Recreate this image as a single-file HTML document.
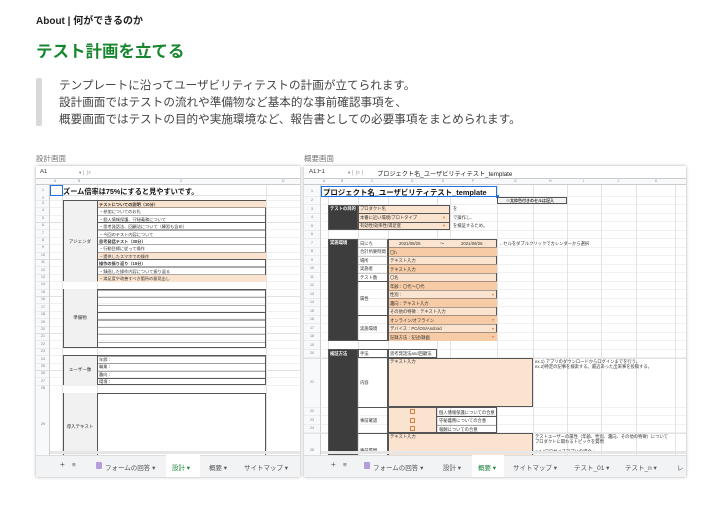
<!DOCTYPE html>
<html><head><meta charset="utf-8">
<style>
*{margin:0;padding:0;box-sizing:border-box}
body{width:720px;height:512px;background:#fff;position:relative;overflow:hidden;font-family:"Liberation Sans","Noto Sans CJK JP",sans-serif;color:#222}
.a{position:absolute}
.t{position:absolute;font-size:4.3px;white-space:nowrap;color:#333;overflow:hidden}
.b{font-weight:bold}
.sheet{position:absolute;background:#fff;box-shadow:0 0 3px rgba(0,0,0,.35)}
.hdr{background:#f8f9fa}
.o1{background:#fbe4cf}
.o2{background:#f6cba5}
.dk{background:#3d3d3d;color:#fff}
.bx{border:0.8px solid #555}
.tab{position:absolute;font-size:6.5px;color:#555;white-space:nowrap;top:462px}
.rn{position:absolute;font-size:3.5px;color:#777;text-align:center;width:14px}
</style></head><body>

<div class="a b" style="left:36px;top:12px;font-size:10px;color:#222">About | 何ができるのか</div>
<div class="a b" style="left:36px;top:38px;font-size:16.5px;color:#17862f">テスト計画を立てる</div>
<div class="a" style="left:36px;top:78px;width:6px;height:48px;background:#d9d9d9;border-radius:2px"></div>
<div class="a" style="left:59px;top:77px;font-size:11.6px;line-height:17px;color:#444">テンプレートに沿ってユーザビリティテストの計画が立てられます。<br>設計画面ではテストの流れや準備物など基本的な事前確認事項を、<br>概要画面ではテストの目的や実施環境など、報告書としての必要事項をまとめられます。</div>
<div class="a" style="left:36px;top:153px;font-size:7.5px;color:#777">設計画面</div>
<div class="a" style="left:304px;top:153px;font-size:7.5px;color:#777">概要画面</div>

<!-- LEFT SHEET -->
<div class="sheet" style="left:36px;top:166px;width:264px;height:311px"></div>
<div class="t" style="left:40px;top:169px;font-size:6px;color:#333">A1</div>
<div class="t" style="left:79px;top:170px;font-size:4.5px;color:#777">▾ │ <i style="font-family:'Liberation Serif',serif;font-size:6px;color:#aaa">fx</i></div>
<div class="a" style="left:36px;top:178px;width:264px;height:0.7px;background:#ccc"></div>
<div class="a hdr" style="left:36px;top:178.5px;width:264px;height:6px;border-bottom:0.7px solid #ccc"></div>
<div class="t" style="left:54px;top:179px;font-size:3.5px;color:#888">A</div>
<div class="t" style="left:78px;top:179px;font-size:3.5px;color:#888">B</div>
<div class="t" style="left:180px;top:179px;font-size:3.5px;color:#888">C</div>
<div class="t" style="left:282px;top:179px;font-size:3.5px;color:#888">D</div>
<div class="a hdr" style="left:36px;top:185px;width:14px;height:270px;border-right:0.7px solid #ccc"></div>
<!-- grid -->
<div class="a" style="left:50px;top:195px;width:250px;height:0.6px;background:#e2e2e2"></div>
<div class="a" style="left:50px;top:200px;width:250px;height:192.4px;background:repeating-linear-gradient(to bottom,#e2e2e2 0,#e2e2e2 0.6px,transparent 0.6px,transparent 7.4px)"></div>
<div class="a" style="left:36px;top:200px;width:14px;height:192.4px;background:repeating-linear-gradient(to bottom,#ddd 0,#ddd 0.6px,transparent 0.6px,transparent 7.4px)"></div>
<div class="a" style="left:62px;top:185px;width:0.6px;height:270px;background:#e2e2e2"></div>
<div class="a" style="left:97px;top:185px;width:0.6px;height:270px;background:#e2e2e2"></div>
<div class="a" style="left:266px;top:185px;width:0.6px;height:270px;background:#e2e2e2"></div>
<div class="rn" style="left:36px;top:188px">1</div>
<div class="rn" style="left:36px;top:196px">2</div>
<div class="rn" style="left:36px;top:200px;line-height:7.4px">3<br>4<br>5<br>6<br>7<br>8<br>9<br>10<br>11<br>12<br>13<br>14<br>15<br>16<br>17<br>18<br>19<br>20<br>21<br>22<br>23<br>24<br>25<br>26<br>27<br>28</div>
<div class="rn" style="left:36px;top:422px">29</div>
<!-- A1 -->
<div class="a" style="left:50px;top:185px;width:12.5px;height:10.5px;border:1.3px solid #1a73e8;background:#fff"></div>
<div class="t b" style="left:63px;top:186.5px;font-size:7.2px;color:#111">ズーム倍率は75%にすると見やすいです。</div>
<!-- agenda -->
<div class="a bx" style="left:63px;top:200px;width:203px;height:81.4px;background:#fff"></div>
<div class="a" style="left:63.5px;top:200.5px;width:34px;height:80.4px;background:#f1f1f1;border-right:0.8px solid #555"></div>
<div class="t" style="left:63px;top:239px;width:34px;text-align:center;font-size:4.5px">アジェンダ</div>
<div class="a o1" style="left:98px;top:200.5px;width:167.5px;height:7px"></div>
<div class="a o1" style="left:98px;top:252.3px;width:167.5px;height:7px"></div>
<div class="a o1" style="left:98px;top:274.5px;width:167.5px;height:7px"></div>
<div class="a" style="left:98px;top:200px;width:168px;height:81.4px;background:repeating-linear-gradient(to bottom,#555 0,#555 0.7px,transparent 0.7px,transparent 7.4px)"></div>
<div class="a" style="left:99px;top:201px;line-height:7.4px;font-size:4.2px;color:#333;white-space:nowrap"><b>テストについての説明（10分）</b><br>・参加についてのお礼<br>・個人情報保護、守秘義務について<br>・思考発話法、回顧法について（練習も含め）<br>・今回のテスト内容について<br><b>思考発話テスト（30分）</b><br>・行動目標に従って操作<br>・提供したスマホでの操作<br><b>操作の振り返り（15分）</b><br>・録画した操作内容について振り返る<br>・満足度や改善すべき箇所の意見出し</div>
<!-- junbi -->
<div class="a bx" style="left:63px;top:288.8px;width:203px;height:59.2px;background:repeating-linear-gradient(to bottom,#555 0,#555 0.7px,transparent 0.7px,transparent 7.4px)"></div>
<div class="a" style="left:63.5px;top:289.3px;width:34px;height:58.2px;background:#f1f1f1;border-right:0.8px solid #555"></div>
<div class="t" style="left:63px;top:315px;width:34px;text-align:center;font-size:4.5px">準備物</div>
<!-- user -->
<div class="a bx" style="left:63px;top:355.4px;width:203px;height:29.8px;background:repeating-linear-gradient(to bottom,#555 0,#555 0.7px,transparent 0.7px,transparent 7.4px)"></div>
<div class="a" style="left:63.5px;top:355.9px;width:34px;height:28.8px;background:#f1f1f1;border-right:0.8px solid #555"></div>
<div class="t" style="left:63px;top:367px;width:34px;text-align:center;font-size:4.5px">ユーザー像</div>
<div class="a" style="left:99px;top:356px;line-height:7.4px;font-size:4.2px;color:#333">年齢：<br>職業：<br>趣向：<br>環境：</div>
<!-- intro -->
<div class="a bx" style="left:63px;top:392.6px;width:203px;height:70px;background:#fff"></div>
<div class="a" style="left:63.5px;top:393px;width:34px;height:69px;background:#f1f1f1;border-right:0.8px solid #555"></div>
<div class="t" style="left:63px;top:424px;width:34px;text-align:center;font-size:4.5px">導入テキスト</div>
<!-- tabs left -->
<div class="a" style="left:50px;top:451px;width:250px;height:3px;background:#e6e6e6"></div>
<div class="a" style="left:36px;top:455px;width:264px;height:22px;background:#f1f3f4;border-top:0.7px solid #ddd"></div>
<div class="a" style="left:166px;top:455px;width:34px;height:22px;background:#fff"></div>
<div class="tab" style="left:60px;font-size:8px;top:460px">+</div>
<div class="tab" style="left:72px">≡</div>
<div class="a" style="left:96px;top:462px;width:6px;height:7px;background:#b39ddb;border-radius:1px"></div>
<div class="tab" style="left:105px">フォームの回答 ▾</div>
<div class="tab" style="left:172px;color:#188038">設計 ▾</div>
<div class="tab" style="left:209px">概要 ▾</div>
<div class="tab" style="left:244px">サイトマップ ▾</div>

<!-- RIGHT SHEET -->
<div class="sheet" style="left:304px;top:166px;width:382px;height:311px;overflow:hidden">
</div>
<div class="t" style="left:309px;top:169px;font-size:6px;color:#333">A1:F1</div>
<div class="t" style="left:348px;top:170px;font-size:4.5px;color:#777">▾ │ <i style="font-family:'Liberation Serif',serif;font-size:6px;color:#aaa">fx</i> │</div>
<div class="t" style="left:377px;top:169px;font-size:6.2px;color:#222">プロジェクト名_ユーザビリティテスト_template</div>
<div class="a" style="left:304px;top:178px;width:382px;height:0.7px;background:#ccc"></div>
<div class="a hdr" style="left:304px;top:178.5px;width:382px;height:6px;border-bottom:0.7px solid #ccc"></div>
<div class="a hdr" style="left:304px;top:185px;width:17px;height:270px;border-right:0.7px solid #ccc"></div>
<div class="t" style="left:323px;top:179px;font-size:3.5px;color:#888;word-spacing:0">A</div>
<div class="t" style="left:341px;top:179px;font-size:3.5px;color:#888">B</div>
<div class="t" style="left:371px;top:179px;font-size:3.5px;color:#888">C</div>
<div class="t" style="left:411px;top:179px;font-size:3.5px;color:#888">D</div>
<div class="t" style="left:442px;top:179px;font-size:3.5px;color:#888">E</div>
<div class="t" style="left:472px;top:179px;font-size:3.5px;color:#888">F</div>
<div class="t" style="left:514px;top:179px;font-size:3.5px;color:#888">G</div>
<div class="t" style="left:549px;top:179px;font-size:3.5px;color:#888">H</div>
<div class="t" style="left:583px;top:179px;font-size:3.5px;color:#888">I</div>
<div class="t" style="left:617px;top:179px;font-size:3.5px;color:#888">J</div>
<div class="t" style="left:655px;top:179px;font-size:3.5px;color:#888">K</div>
<!-- grid lines -->
<div class="a" style="left:321px;top:196px;width:365px;height:161.5px;background:repeating-linear-gradient(to bottom,#e2e2e2 0,#e2e2e2 0.6px,transparent 0.6px,transparent 8.5px)"></div>
<div class="a" style="left:304px;top:196px;width:17px;height:161.5px;background:repeating-linear-gradient(to bottom,#ddd 0,#ddd 0.6px,transparent 0.6px,transparent 8.5px)"></div>
<div class="a" style="left:304px;top:357.5px;width:382px;height:0.6px;background:#e2e2e2"></div>
<div class="a" style="left:304px;top:407px;width:382px;height:25.5px;background:repeating-linear-gradient(to bottom,#e2e2e2 0,#e2e2e2 0.6px,transparent 0.6px,transparent 8.5px)"></div>
<div class="a" style="left:304px;top:432.5px;width:382px;height:0.6px;background:#e2e2e2"></div>
<div class="a" style="left:328px;top:185px;width:0.6px;height:270px;background:#e2e2e2"></div>
<div class="a" style="left:358px;top:185px;width:0.6px;height:270px;background:#e2e2e2"></div>
<div class="a" style="left:388px;top:185px;width:0.6px;height:270px;background:#e2e2e2"></div>
<div class="a" style="left:437px;top:185px;width:0.6px;height:270px;background:#e2e2e2"></div>
<div class="a" style="left:450px;top:185px;width:0.6px;height:270px;background:#e2e2e2"></div>
<div class="a" style="left:497px;top:185px;width:0.6px;height:270px;background:#e2e2e2"></div>
<div class="a" style="left:533px;top:185px;width:0.6px;height:270px;background:#e2e2e2"></div>
<div class="a" style="left:567px;top:185px;width:0.6px;height:270px;background:#e2e2e2"></div>
<div class="a" style="left:601px;top:185px;width:0.6px;height:270px;background:#e2e2e2"></div>
<div class="a" style="left:636px;top:185px;width:0.6px;height:270px;background:#e2e2e2"></div>
<div class="a" style="left:675px;top:185px;width:0.6px;height:270px;background:#e2e2e2"></div>
<div class="rn" style="left:305px;top:189px">1</div>
<div class="rn" style="left:305px;top:196px;line-height:8.5px">2<br>3<br>4<br>5<br>6<br>7<br>8<br>9<br>10<br>11<br>12<br>13<br>14<br>15<br>16<br>17<br>18<br>19<br>20</div>
<div class="rn" style="left:305px;top:380px">21</div>
<div class="rn" style="left:305px;top:407px;line-height:8.5px">22<br>23<br>24</div>
<div class="rn" style="left:305px;top:448px">25</div>
<!-- row 1 -->
<div class="a" style="left:321px;top:185.5px;width:176px;height:11px;border:1.2px solid #1a73e8;background:#fff"></div>
<div class="a" style="left:495.5px;top:195px;width:3px;height:3px;background:#1a73e8"></div>
<div class="t b" style="left:323px;top:187px;font-size:7.4px;color:#111">プロジェクト名_ユーザビリティテスト_template</div>
<!-- note G2 -->
<div class="a" style="left:497px;top:196.5px;width:70px;height:7.5px;border:0.8px solid #555;background:#f3f3f3"></div>
<div class="t b" style="left:506px;top:198px;font-size:4px">※太枠色付きのセルは記入</div>
<!-- purpose -->
<div class="a dk bx" style="left:328px;top:204.5px;width:30px;height:25.5px"></div>
<div class="t b" style="left:330px;top:206px;font-size:4.3px;color:#fff">テストの目的</div>
<div class="a o1 bx" style="left:358px;top:204.5px;width:92px;height:25.5px"></div>
<div class="a" style="left:358px;top:213px;width:92px;height:0.6px;background:#555"></div>
<div class="a" style="left:358px;top:221.5px;width:92px;height:0.6px;background:#555"></div>
<div class="t" style="left:360px;top:206px">プロダクト名</div>
<div class="t" style="left:360px;top:214.5px">本番に近い環境/プロトタイプ</div>
<div class="t" style="left:360px;top:223px">有効性/効率性/満足度</div>
<div class="t" style="left:443px;top:214.5px;color:#e07b39">▾</div>
<div class="t" style="left:443px;top:223px;color:#e07b39">▾</div>
<div class="t" style="left:453px;top:206px">を</div>
<div class="t" style="left:453px;top:214.5px">で操作し、</div>
<div class="t" style="left:453px;top:223px">を検証するため。</div>
<!-- environment -->
<div class="a dk bx" style="left:328px;top:238.5px;width:30px;height:102px"></div>
<div class="t b" style="left:330px;top:240px;font-size:4.3px;color:#fff">実施環境</div>
<div class="a bx" style="left:388px;top:238.5px;width:109px;height:102px;background:#fbe4cf"></div>
<div class="a o2" style="left:388.5px;top:247px;width:108px;height:8.5px"></div>
<div class="a o2" style="left:388.5px;top:264px;width:108px;height:8.5px"></div>
<div class="a o2" style="left:388.5px;top:281px;width:108px;height:8.5px"></div>
<div class="a o2" style="left:388.5px;top:298px;width:108px;height:8.5px"></div>
<div class="a o2" style="left:388.5px;top:315px;width:108px;height:8.5px"></div>
<div class="a o2" style="left:388.5px;top:332px;width:108px;height:8.5px"></div>
<div class="a" style="left:388px;top:238.5px;width:109px;height:102px;background:repeating-linear-gradient(to bottom,#555 0,#555 0.6px,transparent 0.6px,transparent 8.5px)"></div>
<div class="a" style="left:358px;top:238.5px;width:30px;height:102px;border-right:0.8px solid #555;border-bottom:0.8px solid #555"></div>
<div class="a" style="left:358px;top:281px;width:30px;height:0.6px;background:#555"></div>
<div class="a" style="left:358px;top:315px;width:30px;height:0.6px;background:#555"></div>
<div class="a" style="left:358px;top:238.5px;width:30px;height:42.5px;background:repeating-linear-gradient(to bottom,#999 0,#999 0.5px,transparent 0.5px,transparent 8.5px)"></div>
<div class="a" style="left:360px;top:239.5px;line-height:8.5px;font-size:4.3px;color:#333">日にち<br>合計所要時間<br>場所<br>実施者<br>テスト数</div>
<div class="t" style="left:360px;top:296px">属性</div>
<div class="t" style="left:360px;top:326px">実施環境</div>
<div class="t" style="left:399px;top:240.5px">2021/08/25</div>
<div class="t" style="left:440px;top:240.5px">〜</div>
<div class="t" style="left:461px;top:240.5px">2021/08/26</div>
<div class="t" style="left:499px;top:240.5px">←セルをダブルクリックでカレンダーから選択</div>
<div class="a" style="left:390px;top:248.5px;line-height:8.5px;font-size:4.3px;color:#333;white-space:nowrap">〇h<br>テキスト入力<br>テキスト入力<br>〇名<br>年齢：〇代〜〇代<br>性別：<br>趣向：テキスト入力<br>その他の特徴：テキスト入力<br>オンライン/オフライン<br>デバイス：PC/iOS/Android<br>記録方法：記述/録画</div>
<div class="a" style="left:492px;top:291px;line-height:8.5px;font-size:4px;color:#e07b39">▾</div>
<div class="a" style="left:492px;top:316px;line-height:8.5px;font-size:4px;color:#e07b39">▾<br>▾<br>▾</div>
<!-- verification -->
<div class="a dk" style="left:328px;top:349px;width:30px;height:106px;border:0.8px solid #555"></div>
<div class="t b" style="left:330px;top:350.5px;font-size:4.3px;color:#fff">検証方法</div>
<div class="a bx" style="left:358px;top:349px;width:30px;height:8.5px"></div>
<div class="t" style="left:360px;top:350.5px">手法</div>
<div class="a bx" style="left:388px;top:349px;width:49px;height:8.5px"></div>
<div class="t" style="left:390px;top:350.5px">思考発話法and回顧法</div>
<div class="a" style="left:358px;top:357.5px;width:30px;height:97.5px;border-right:0.8px solid #555"></div>
<div class="a" style="left:358px;top:407px;width:30px;height:0.6px;background:#555"></div>
<div class="a" style="left:358px;top:432.5px;width:30px;height:0.6px;background:#555"></div>
<div class="t" style="left:360px;top:380px">内容</div>
<div class="a o1" style="left:388px;top:357.5px;width:145px;height:49.5px;border:0.9px solid #555"></div>
<div class="t" style="left:390px;top:358.5px">テキスト入力</div>
<div class="t" style="left:535px;top:358.5px;line-height:5px">ex.1) アプリのダウンロードからログインまでを行う。<br>ex.2)特定の記事を検索する。最近あった出来事を投稿する。</div>
<div class="a o1" style="left:388px;top:407px;width:49px;height:25.5px;border:0.8px solid #555"></div>
<div class="a" style="left:437px;top:407px;width:60px;height:25.5px;border:0.8px solid #555;border-left:none;background:repeating-linear-gradient(to bottom,transparent 0,transparent 8.2px,#555 8.2px,#555 8.8px)"></div>
<div class="a" style="left:410px;top:409px;width:5px;height:5px;border:0.9px solid #e07b39"></div>
<div class="a" style="left:410px;top:417.5px;width:5px;height:5px;border:0.9px solid #e07b39"></div>
<div class="a" style="left:410px;top:426px;width:5px;height:5px;border:0.9px solid #e07b39"></div>
<div class="a" style="left:439px;top:408.5px;line-height:8.5px;font-size:4.3px;color:#333;white-space:nowrap">個人情報保護についての合意<br>守秘義務についての合意<br>報酬についての合意</div>
<div class="t" style="left:360px;top:418px">事前確認</div>
<div class="a o1" style="left:388px;top:432.5px;width:145px;height:30px;border:0.9px solid #555"></div>
<div class="t" style="left:390px;top:433.5px">テキスト入力</div>
<div class="t" style="left:360px;top:448px">事前質問</div>
<div class="t" style="left:535px;top:433.5px;line-height:5px">テストユーザーの属性（年齢、性別、趣向、その他の特徴）について<br>プロダクトに関わるトピックを質問<br><br>ex1.)〇〇サイズアプリの場合：</div>
<!-- tabs right -->
<div class="a" style="left:321px;top:451px;width:365px;height:3px;background:#e6e6e6"></div>
<div class="a" style="left:304px;top:455px;width:382px;height:22px;background:#f1f3f4;border-top:0.7px solid #ddd"></div>
<div class="a" style="left:472px;top:455px;width:32px;height:22px;background:#fff"></div>
<div class="tab" style="left:331px;font-size:8px;top:460px">+</div>
<div class="tab" style="left:343px">≡</div>
<div class="a" style="left:364px;top:462px;width:6px;height:7px;background:#b39ddb;border-radius:1px"></div>
<div class="tab" style="left:373px">フォームの回答 ▾</div>
<div class="tab" style="left:443px">設計 ▾</div>
<div class="tab" style="left:478px;color:#188038">概要 ▾</div>
<div class="tab" style="left:513px">サイトマップ ▾</div>
<div class="tab" style="left:574px">テスト_01 ▾</div>
<div class="tab" style="left:625px">テスト_n ▾</div>
<div class="tab" style="left:677px;width:9px;overflow:hidden">レ</div>
</body></html>
